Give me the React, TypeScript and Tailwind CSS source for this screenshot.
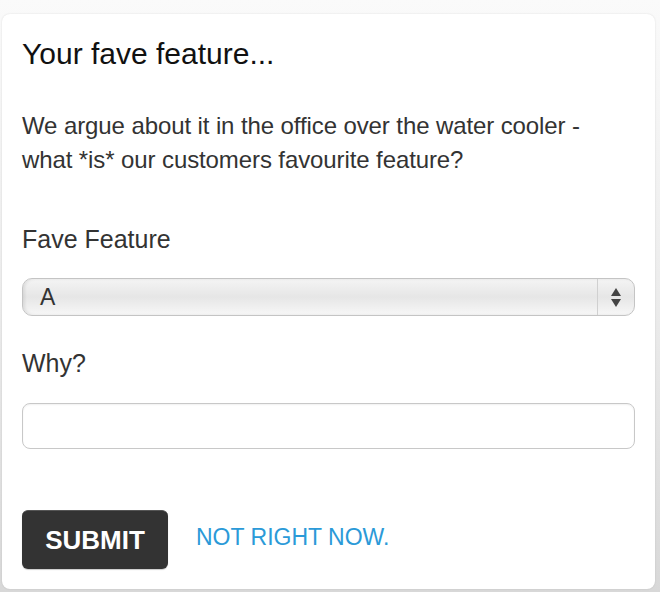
import React, { useState } from 'react';

// Select that mimics the old Mac-style popup button
const FaveSelect = ({ value }: { value: string }) => (
  <div className="relative flex h-[38px] w-full items-center rounded-[10px] border border-[#c4c4c4] bg-gradient-to-b from-[#f4f4f4] via-[#e6e6e6] to-[#f7f7f7] shadow-[inset_2px_0_3px_rgba(0,0,0,0.08)]">
    <span className="flex-1 pl-[17px] text-[23px] leading-none text-[#333]">{value}</span>
    <div className="flex h-full w-[37px] flex-col items-center justify-center gap-[3px] border-l border-[#d0d0d0]">
      <svg width="10" height="8" viewBox="0 0 10 8">
        <path d="M5 0 L10 8 L0 8 Z" fill="#444" />
      </svg>
      <svg width="10" height="8" viewBox="0 0 10 8">
        <path d="M0 0 L10 0 L5 8 Z" fill="#444" />
      </svg>
    </div>
  </div>
);

export default function App() {
  const [why, setWhy] = useState('');

  return (
    <div className="flex h-[592px] w-[660px] bg-gradient-to-b from-[#fafafa] via-[#ececec] to-[#d8d8d8] pb-[3px] pl-[2px] pr-[5px] pt-[14px] font-['Liberation_Sans',Arial,sans-serif]">
      <div className="flex flex-1 flex-col rounded-lg bg-white px-5 pb-5 pt-[22px] shadow-[0_0_2px_rgba(0,0,0,0.12)]">
        <h2 className="text-[30px] leading-[36px] text-[#111]">Your fave feature...</h2>

        <p className="mt-[37px] text-[24px] leading-[34px] tracking-[-0.1px] text-[#333]">
          We argue about it in the office over the water cooler -<br />
          what *is* our customers favourite feature?
        </p>

        <label className="mt-[47px] text-[25px] leading-[30px] text-[#333]">Fave Feature</label>
        <div className="mt-6">
          <FaveSelect value="A" />
        </div>

        <label className="mt-8 text-[25px] leading-[30px] text-[#333]">Why?</label>
        <input
          value={why}
          onChange={(e) => setWhy(e.target.value)}
          className="mt-[25px] h-[46px] w-full rounded-[8px] border-[1.5px] border-[#c8c8c8] bg-white px-3 text-[22px] text-[#333] shadow-[inset_0_1px_2px_rgba(0,0,0,0.06)] outline-none"
        />

        <div className="mt-[61px] flex items-center">
          <button className="h-[59px] w-[146px] rounded-[6px] border-t border-[#555] bg-[#333] text-[26px] font-bold leading-none text-white shadow-[0_1px_1px_rgba(0,0,0,0.2)]">
            SUBMIT
          </button>
          <a href="#" className="ml-[28px] mt-[-4px] text-[23px] text-[#2b9ad8]">
            NOT RIGHT NOW.
          </a>
        </div>
      </div>
    </div>
  );
}
